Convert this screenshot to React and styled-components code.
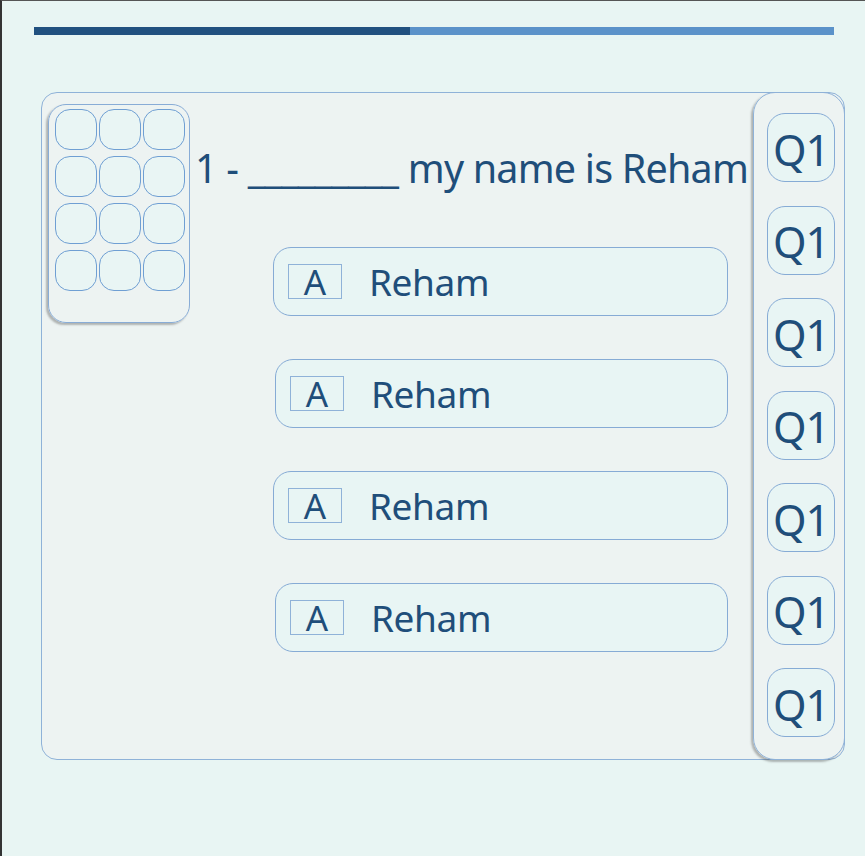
import React from 'react'
import styled, { createGlobalStyle } from 'styled-components'

const GlobalStyle = createGlobalStyle`
  * {
    box-sizing: border-box;
    margin: 0;
    padding: 0;
  }
  html, body {
    background: #e8f5f3;
  }
  body {
    font-family: 'Noto Sans', 'Open Sans', sans-serif;
    color: #1f4e7a;
  }
`
const Page = styled.div`
  min-height: 856px;
  border-left: 2px solid #333;
  border-top: 1px solid #555;
  padding: 26px 20px 0 32px;
`
const Progress = styled.div`
  display: flex;
  height: 8px;
  margin-right: 11px;
  background: #5b92c9;
`
const ProgressFill = styled.div`
  width: ${p => p.$value}%;
  background: #21517f;
`
const Card = styled.div`
  display: flex;
  margin: 57px 0 0 7px;
  height: 668px;
  background: #edf3f2;
  border: 1px solid #8fb2d8;
  border-radius: 16px;
`
const Main = styled.div`
  flex: 1;
  display: flex;
  align-items: flex-start;
  padding: 11px 0 0 6px;
`
const Keypad = styled.div`
  display: grid;
  grid-template-columns: repeat(3, 42px);
  grid-auto-rows: 41px;
  gap: 6px 2px;
  width: 142px;
  height: 219px;
  padding: 4px 0 0 6px;
  border: 1px solid #88acd6;
  border-radius: 18px;
  box-shadow: -2px 2px 2px rgba(60, 60, 60, 0.35);
`
const Key = styled.div`
  border: 1px solid #6f9fd3;
  border-radius: 15px;
  background: #e9f5f4;
`
const Content = styled.div`
  flex: 1;
  padding: 40px 0 0 5px;
`
const Question = styled.div`
  font-size: 39.5px;
  line-height: 48px;
  white-space: nowrap;
  letter-spacing: -0.8px;
`
const Options = styled.div`
  display: flex;
  flex-direction: column;
  gap: 43px;
  margin: 55px 0 0 78px;
  width: 455px;
`
const Option = styled.div`
  display: flex;
  align-items: center;
  height: 69px;
  margin-left: ${p => (p.$shift ? '2px' : '0')};
  padding: 0 0 0 14px;
  border: 1px solid #86abd5;
  border-radius: 18px;
  background: #e8f5f4;
`
const Letter = styled.span`
  display: flex;
  align-items: center;
  justify-content: center;
  width: 54px;
  height: 35px;
  border: 1px solid #8fb2d8;
  font-size: 35px;
`
const Answer = styled.span`
  margin-left: 27px;
  font-size: 37px;
  letter-spacing: -0.4px;
`
const Sidebar = styled.div`
  display: flex;
  flex-direction: column;
  gap: 23.5px;
  width: 92px;
  margin: -1px -1px -1px 0;
  padding: 20px 0 0 13px;
  border: 1px solid #8fb2d8;
  border-radius: 22px;
  box-shadow: -2px 2px 2px rgba(60, 60, 60, 0.35);
`
const QButton = styled.div`
  display: flex;
  align-items: center;
  justify-content: center;
  width: 68px;
  height: 69px;
  padding-top: 3px;
  border: 1px solid #86abd5;
  border-radius: 18px;
  background: #e8f5f4;
  font-size: 43px;
  letter-spacing: -1px;
`

export default function App() {
  return (
    <>
      <GlobalStyle />
      <Page>
        <Progress>
          <ProgressFill $value={47} />
        </Progress>
        <Card>
          <Main>
            <Keypad>
              {Array.from({ length: 12 }).map((_, i) => (
                <Key key={i} />
              ))}
            </Keypad>
            <Content>
              <Question>1 - _________ my name is Reham</Question>
              <Options>
                {[false, true, false, true].map((shift, i) => (
                  <Option key={i} $shift={shift}>
                    <Letter>A</Letter>
                    <Answer>Reham</Answer>
                  </Option>
                ))}
              </Options>
            </Content>
          </Main>
          <Sidebar>
            {Array.from({ length: 7 }).map((_, i) => (
              <QButton key={i}>Q1</QButton>
            ))}
          </Sidebar>
        </Card>
      </Page>
    </>
  )
}
